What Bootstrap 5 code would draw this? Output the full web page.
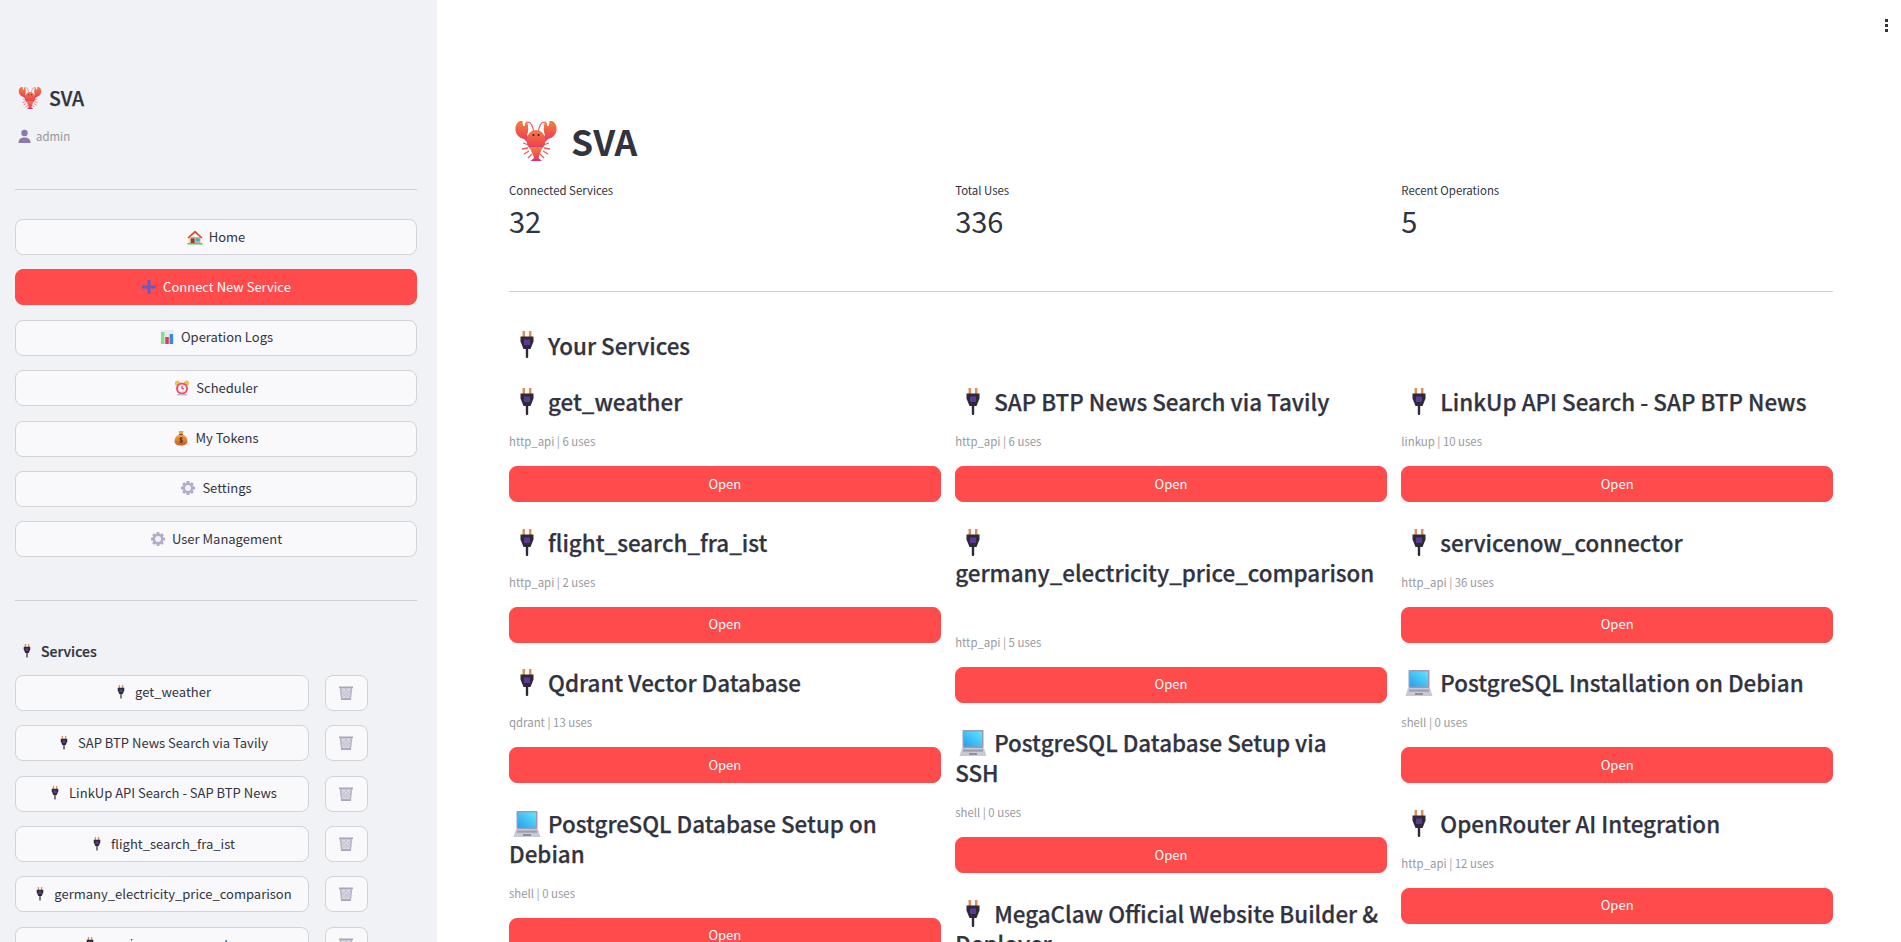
<!DOCTYPE html>
<html lang="en">
<head>
<meta charset="utf-8">
<title>SVA</title>
<link href="https://cdn.jsdelivr.net/npm/bootstrap@5.3.0/dist/css/bootstrap.min.css" rel="stylesheet">
<style>
html,body{height:100%;overflow:hidden}
body{font-family:"Noto Sans CJK SC","Noto Sans",sans-serif;color:#31333f;background:#fff;font-size:16px}
.svg-defs{position:absolute;width:0;height:0}
.app-shell{height:942px;overflow:hidden}
.side-pane{width:437px;flex:none;background:#f0f2f6;padding:0 20px 0 15px;height:942px;overflow:hidden}
.main-pane{flex:1 1 auto;padding:0 68px 0 72px;height:942px;overflow:hidden;min-width:0}
.rule{border:0;border-top:1px solid #d0d1d6;opacity:1;margin:0}
.side-brand{margin:83px 0 0;padding-left:3px;font-size:19.5px;font-weight:500;-webkit-text-stroke:.25px #31333f;line-height:30px;height:30px;display:flex;align-items:center}
.side-brand svg{width:24px;height:24px;margin-right:7px}
.side-user{margin:13px 0 0;padding-left:3px;font-size:11.4px;line-height:20px;color:#95969d;display:flex;align-items:center}
.side-user svg{width:13px;height:14px;margin-right:5px}
.side-pane .r1{margin-top:43px}
.app-btn{display:flex;align-items:center;justify-content:center;height:36px;padding:0 4px 1px;background:#f9f9fb;border:1px solid #d2d3d8;border-radius:8px;color:#31333f;font-size:13px;line-height:20px;white-space:nowrap}
.app-btn svg{width:16px;height:16px;margin-right:6px;flex:none}
.primary-btn{background:#ff4b4b;border-color:#ff4b4b;color:#fff}
.btn-stack{margin-top:29px;display:flex;flex-direction:column;gap:14.4px}
.r2{margin-top:42.5px}
.side-head{margin:38px 0 0;padding-left:4px;font-size:14px;font-weight:500;-webkit-text-stroke:.2px #31333f;line-height:24px;display:flex;align-items:center}
.side-head svg{width:16px;height:18px;margin-right:6px}
.svc-rows{margin-top:12px;display:flex;flex-direction:column;gap:14.4px}
.svc-btn{width:294px}
.bin-btn{width:42.5px;padding:0}
.bin-btn svg{margin:0;width:16px;height:16px}
.page-title{margin:116px 0 0;font-size:35.5px;font-weight:700;line-height:50px;display:flex;align-items:center}
.page-title svg{width:44px;height:42px;margin:0 13px 0 5px;flex:none}
.col-band{--bs-gutter-x:14.5px}
.metric-label{margin:14px 0 0;font-size:11.4px;line-height:20px;height:20px}
.metric-value{font-size:29px;line-height:40px}
.main-pane .r3{margin-top:51px}
.section-title{margin:36px 0 24px;font-size:22.4px;font-weight:500;-webkit-text-stroke:.25px #31333f;line-height:34px;display:flex;align-items:center}
.title-icon{width:32px;height:30px;margin:-6px 5px -6px 2px;vertical-align:baseline;flex:none}
.svc-title{margin:0;font-size:22.4px;font-weight:500;-webkit-text-stroke:.25px #31333f;line-height:30px}
.svc-tall{padding-bottom:30px}
.svc-meta{margin:16px 0 0;font-size:11.4px;line-height:19px;color:#98999f}
.open-btn{margin:15px 0 24.5px}
.kebab{position:absolute;top:19px;right:13px;display:flex;flex-direction:column;gap:2px}
.kebab span{width:3px;height:3px;background:#31333f;display:block}
</style>
</head>
<body>
<svg class="svg-defs" aria-hidden="true">
<defs>
<linearGradient id="gLob" x1="0" y1="0" x2="0" y2="1"><stop offset="0" stop-color="#f0803f"/><stop offset=".6" stop-color="#ef4f4f"/><stop offset="1" stop-color="#d6307f"/></linearGradient>
<linearGradient id="gScr" x1="0" y1="1" x2="1" y2="0"><stop offset="0" stop-color="#2a9fe8"/><stop offset="1" stop-color="#5fe6ff"/></linearGradient>
<linearGradient id="gBag" x1="0" y1="0" x2="0" y2="1"><stop offset="0" stop-color="#f5a93e"/><stop offset="1" stop-color="#c9581f"/></linearGradient>
<symbol id="i-lobster" viewBox="0 0 44 42">
<g fill="none" stroke="#ee5a5a" stroke-width="1.1"><path d="M20 14C19 6 17 2 14 2s-2 3-2 6"/><path d="M24 14c1-8 3-12 6-12s2 3 2 6"/><path d="M15 25l-6-2M14 28l-6 1M15 31l-5 3M18 34l-4 4M29 25l6-2M30 28l6 1M29 31l5 3M26 34l4 4" stroke-width="1.3"/></g>
<path d="M6 1C3 2 1 6 1.5 10c.5 5 4 8 8.5 9l5 5 2-2-4-7c1.5-3 1.5-8 .5-12l-1.5-2-1 5-2 0-.5-5z" fill="url(#gLob)"/>
<path d="M38 1c3 1 5 5 4.5 9-.5 5-4 8-8.500 9l-5 5-2-2 4-7c-1.5-3-1.5-8-.5-12l1.5-2 1 5 2 0 .5-5z" fill="url(#gLob)"/>
<ellipse cx="22" cy="20.5" rx="9.5" ry="10.5" fill="url(#gLob)"/>
<path d="M15.5 27h13l-3 8-1 3 3.500 3H16.5l3.500-3-1-3z" fill="url(#gLob)"/>
<circle cx="19.5" cy="15" r="1.1" fill="#3a2530"/><circle cx="24.5" cy="15" r="1.1" fill="#3a2530"/>
</symbol>
<symbol id="i-plug" viewBox="0 0 32 30">
<rect x="11.5" y="1" width="2.6" height="7" fill="#d9925a"/><rect x="17.9" y="1" width="2.6" height="7" fill="#d9925a"/>
<path d="M9.5 6.5h13v5l-3 7.5h-7l-3-7.5z" fill="#2e2838"/>
<rect x="13" y="9.5" width="6" height="5.5" fill="#5b3a96"/>
<rect x="14.8" y="18" width="2.4" height="10" rx="1" fill="#2e2838"/>
</symbol>
<symbol id="i-laptop" viewBox="0 0 32 30">
<rect x="5.5" y="2" width="21" height="18" rx="1" fill="#9a9ab5"/>
<rect x="7" y="3.5" width="18" height="15" fill="url(#gScr)"/>
<path d="M5 20h22l2.5 8h-27z" fill="#c9c9d6"/>
<rect x="6" y="21.5" width="20" height="2.2" fill="#9d9dac"/>
<rect x="12" y="25" width="8" height="2" fill="#8f8f9e"/>
</symbol>
<symbol id="i-home" viewBox="0 0 16 16">
<path d="M2.5 8h11v6h-11z" fill="#e0a878"/><path d="M0.500 8.500L8 1.500l7.500 7-1 1L8 4 1.500 9.500z" fill="#d8492f"/>
<rect x="4" y="9.5" width="3.5" height="4.5" fill="#7a4a2d"/><rect x="9" y="9.5" width="3.5" height="2.5" fill="#39a7e6"/>
<rect x="0.5" y="14" width="15" height="1.5" fill="#3fce72"/>
</symbol>
<symbol id="i-plus" viewBox="0 0 16 16"><rect x="6.5" y="1" width="3" height="14" rx=".5" fill="#6a5ac0"/><rect x="1" y="6.5" width="14" height="3" rx=".5" fill="#6a5ac0"/></symbol>
<symbol id="i-chart" viewBox="0 0 16 16">
<rect x="1.5" y="1" width="13" height="14" fill="#e9e9f1"/>
<rect x="2" y="3" width="3.5" height="12" fill="#8fd98a"/><rect x="6.3" y="8" width="3.5" height="7" fill="#e8316f"/><rect x="10.6" y="5" width="3.5" height="10" fill="#2f8fd6"/>
</symbol>
<symbol id="i-clock" viewBox="0 0 16 16">
<circle cx="3.5" cy="3.2" r="2.6" fill="#eec24b"/><circle cx="12.5" cy="3.2" r="2.6" fill="#eec24b"/>
<circle cx="8" cy="8.5" r="6" fill="#ec4f74"/><circle cx="8" cy="8.5" r="4" fill="#fbe8ec"/>
<path d="M8 6v2.700h2" stroke="#a33" stroke-width=".9" fill="none"/><rect x="3" y="14" width="10" height="1.5" fill="#c9b8cc"/>
</symbol>
<symbol id="i-bag" viewBox="0 0 16 16">
<path d="M5.5 1h5l-1 3.500h-3z" fill="#e6a446"/>
<path d="M6 4.500h4c3 1.500 4.500 4 4.500 6.500 0 3-2.500 4.500-6.500 4.500s-6.500-1.500-6.500-4.500c0-2.500 1.500-5 4.500-6.500z" fill="url(#gBag)"/>
<rect x="6" y="4" width="4" height="1" fill="#8a4a1e"/>
<path d="M9.700 8.300c-1-.8-3-.6-3 .6s3 .8 3 2.100-2.100 1.400-3.200.6M8 7v6" stroke="#43281a" stroke-width=".9" fill="none"/>
</symbol>
<symbol id="i-gear" viewBox="0 0 16 16">
<g fill="#b3acc9"><circle cx="8" cy="8" r="5.5"/><rect x="6.5" y="1" width="3" height="14" rx=".6"/><rect x="1" y="6.5" width="14" height="3" rx=".6"/><rect x="6.5" y="1" width="3" height="14" rx=".6" transform="rotate(45 8 8)"/><rect x="6.5" y="1" width="3" height="14" rx=".6" transform="rotate(-45 8 8)"/></g>
<circle cx="8" cy="8" r="3" fill="#f2f1f6"/>
</symbol>
<symbol id="i-bust" viewBox="0 0 13 14"><circle cx="6.5" cy="4" r="3.2" fill="#8d78ad"/><path d="M0.500 14c0-4 2.500-5.500 6-5.500s6 1.500 6 5.500z" fill="#8d78ad"/></symbol>
<symbol id="i-bin" viewBox="0 0 16 16">
<path d="M1.5 2h13l-1.500 12.500H3z" fill="#b9b6c8"/><path d="M3.5 3.500h9l-1 9.500h-7z" fill="#dcdae4"/>
<path d="M4 5l7.500 7M7 4l5 5M4.500 8l4 4.500M12 5l-7.500 7M9 4l-5 5M11.500 8l-4 4.500" stroke="#aeabbe" stroke-width=".5"/>
<rect x="1" y="1.5" width="14" height="1.5" fill="#a9a6ba"/><rect x="3" y="13.5" width="10" height="1.5" fill="#a9a6ba"/>
</symbol>
</defs>
</svg>

<div class="app-shell d-flex position-relative">
<aside class="side-pane">
  <div class="side-brand"><svg><use href="#i-lobster"/></svg>SVA</div>
  <div class="side-user"><svg><use href="#i-bust"/></svg>admin</div>
  <hr class="rule r1">
  <div class="btn-stack">
    <button type="button" class="btn app-btn"><svg><use href="#i-home"/></svg>Home</button>
    <button type="button" class="btn app-btn primary-btn"><svg><use href="#i-plus"/></svg>Connect New Service</button>
    <button type="button" class="btn app-btn"><svg><use href="#i-chart"/></svg>Operation Logs</button>
    <button type="button" class="btn app-btn"><svg><use href="#i-clock"/></svg>Scheduler</button>
    <button type="button" class="btn app-btn"><svg><use href="#i-bag"/></svg>My Tokens</button>
    <button type="button" class="btn app-btn"><svg><use href="#i-gear"/></svg>Settings</button>
    <button type="button" class="btn app-btn"><svg><use href="#i-gear"/></svg>User Management</button>
  </div>
  <hr class="rule r2">
  <div class="side-head"><svg><use href="#i-plug"/></svg>Services</div>
  <div class="svc-rows">
    <div class="d-flex gap-3"><button type="button" class="btn app-btn svc-btn"><svg><use href="#i-plug"/></svg>get_weather</button><button type="button" class="btn app-btn bin-btn" aria-label="Delete"><svg><use href="#i-bin"/></svg></button></div>
    <div class="d-flex gap-3"><button type="button" class="btn app-btn svc-btn"><svg><use href="#i-plug"/></svg>SAP BTP News Search via Tavily</button><button type="button" class="btn app-btn bin-btn" aria-label="Delete"><svg><use href="#i-bin"/></svg></button></div>
    <div class="d-flex gap-3"><button type="button" class="btn app-btn svc-btn"><svg><use href="#i-plug"/></svg>LinkUp API Search - SAP BTP News</button><button type="button" class="btn app-btn bin-btn" aria-label="Delete"><svg><use href="#i-bin"/></svg></button></div>
    <div class="d-flex gap-3"><button type="button" class="btn app-btn svc-btn"><svg><use href="#i-plug"/></svg>flight_search_fra_ist</button><button type="button" class="btn app-btn bin-btn" aria-label="Delete"><svg><use href="#i-bin"/></svg></button></div>
    <div class="d-flex gap-3"><button type="button" class="btn app-btn svc-btn"><svg><use href="#i-plug"/></svg>germany_electricity_price_comparison</button><button type="button" class="btn app-btn bin-btn" aria-label="Delete"><svg><use href="#i-bin"/></svg></button></div>
    <div class="d-flex gap-3"><button type="button" class="btn app-btn svc-btn"><svg><use href="#i-plug"/></svg>servicenow_connector</button><button type="button" class="btn app-btn bin-btn" aria-label="Delete"><svg><use href="#i-bin"/></svg></button></div>
  </div>
</aside>

<main class="main-pane">
  <h1 class="page-title"><svg><use href="#i-lobster"/></svg>SVA</h1>
  <div class="row col-band">
    <div class="col-4"><div class="metric-label">Connected Services</div><div class="metric-value">32</div></div>
    <div class="col-4"><div class="metric-label">Total Uses</div><div class="metric-value">336</div></div>
    <div class="col-4"><div class="metric-label">Recent Operations</div><div class="metric-value">5</div></div>
  </div>
  <hr class="rule r3">
  <h2 class="section-title"><svg class="title-icon"><use href="#i-plug"/></svg>Your Services</h2>
  <div class="row col-band">
    <div class="col-4">
      <h3 class="svc-title"><svg class="title-icon"><use href="#i-plug"/></svg>get_weather</h3>
      <p class="svc-meta">http_api | 6 uses</p>
      <button type="button" class="btn app-btn primary-btn w-100 open-btn">Open</button>
      <h3 class="svc-title"><svg class="title-icon"><use href="#i-plug"/></svg>flight_search_fra_ist</h3>
      <p class="svc-meta">http_api | 2 uses</p>
      <button type="button" class="btn app-btn primary-btn w-100 open-btn">Open</button>
      <h3 class="svc-title"><svg class="title-icon"><use href="#i-plug"/></svg>Qdrant Vector Database</h3>
      <p class="svc-meta">qdrant | 13 uses</p>
      <button type="button" class="btn app-btn primary-btn w-100 open-btn">Open</button>
      <h3 class="svc-title"><svg class="title-icon"><use href="#i-laptop"/></svg>PostgreSQL Database Setup on<br>Debian</h3>
      <p class="svc-meta">shell | 0 uses</p>
      <button type="button" class="btn app-btn primary-btn w-100 open-btn">Open</button>
    </div>
    <div class="col-4">
      <h3 class="svc-title"><svg class="title-icon"><use href="#i-plug"/></svg>SAP BTP News Search via Tavily</h3>
      <p class="svc-meta">http_api | 6 uses</p>
      <button type="button" class="btn app-btn primary-btn w-100 open-btn">Open</button>
      <h3 class="svc-title svc-tall"><svg class="title-icon"><use href="#i-plug"/></svg><br>germany_electricity_price_comparison</h3>
      <p class="svc-meta">http_api | 5 uses</p>
      <button type="button" class="btn app-btn primary-btn w-100 open-btn">Open</button>
      <h3 class="svc-title"><svg class="title-icon"><use href="#i-laptop"/></svg>PostgreSQL Database Setup via<br>SSH</h3>
      <p class="svc-meta">shell | 0 uses</p>
      <button type="button" class="btn app-btn primary-btn w-100 open-btn">Open</button>
      <h3 class="svc-title"><svg class="title-icon"><use href="#i-plug"/></svg>MegaClaw Official Website Builder &amp;<br>Deployer</h3>
    </div>
    <div class="col-4">
      <h3 class="svc-title"><svg class="title-icon"><use href="#i-plug"/></svg>LinkUp API Search - SAP BTP News</h3>
      <p class="svc-meta">linkup | 10 uses</p>
      <button type="button" class="btn app-btn primary-btn w-100 open-btn">Open</button>
      <h3 class="svc-title"><svg class="title-icon"><use href="#i-plug"/></svg>servicenow_connector</h3>
      <p class="svc-meta">http_api | 36 uses</p>
      <button type="button" class="btn app-btn primary-btn w-100 open-btn">Open</button>
      <h3 class="svc-title"><svg class="title-icon"><use href="#i-laptop"/></svg>PostgreSQL Installation on Debian</h3>
      <p class="svc-meta">shell | 0 uses</p>
      <button type="button" class="btn app-btn primary-btn w-100 open-btn">Open</button>
      <h3 class="svc-title"><svg class="title-icon"><use href="#i-plug"/></svg>OpenRouter AI Integration</h3>
      <p class="svc-meta">http_api | 12 uses</p>
      <button type="button" class="btn app-btn primary-btn w-100 open-btn">Open</button>
    </div>
  </div>
</main>
<div class="kebab" aria-hidden="true"><span></span><span></span><span></span></div>
</div>
<script src="https://cdn.jsdelivr.net/npm/bootstrap@5.3.0/dist/js/bootstrap.bundle.min.js"></script>
</body>
</html>
